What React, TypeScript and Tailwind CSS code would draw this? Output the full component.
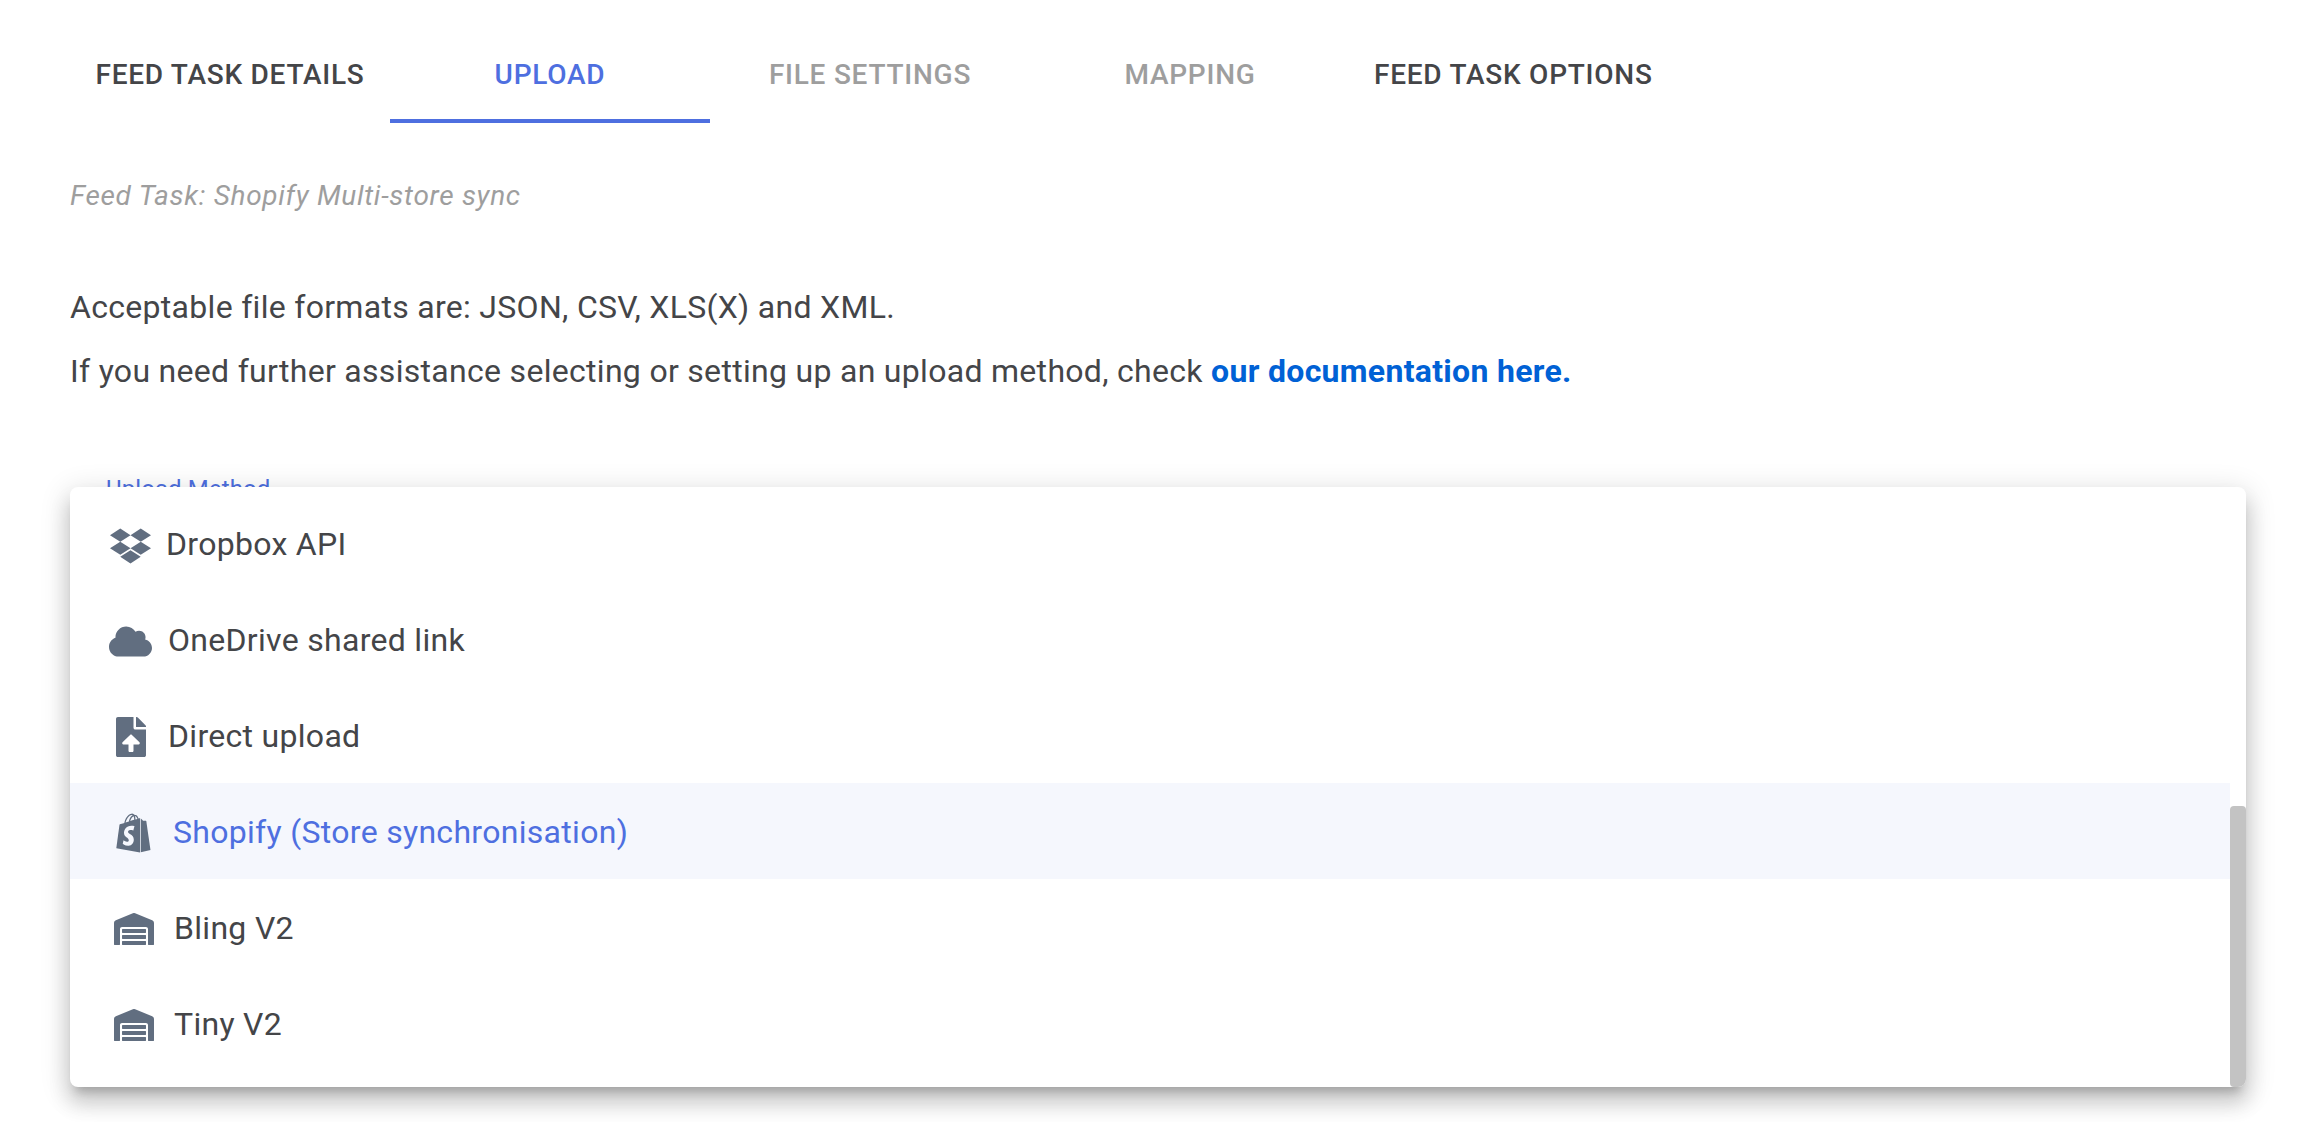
import type { ReactNode } from "react";
import { FaCloud, FaDropbox, FaFileUpload, FaShopify, FaWarehouse } from "react-icons/fa";

interface Tab {
  label: string;
  className: string;
}

interface Option {
  label: string;
  icon: ReactNode;
  active?: boolean;
}

const tabs: Tab[] = [
  { label: "FEED TASK DETAILS", className: "border-transparent text-[#444548]" },
  { label: "UPLOAD", className: "border-[#4e6fe0] text-[#4e6fe0]" },
  { label: "FILE SETTINGS", className: "border-transparent text-[#9e9e9e]" },
  { label: "MAPPING", className: "border-transparent text-[#9e9e9e]" },
  { label: "FEED TASK OPTIONS", className: "border-transparent text-[#444548]" },
];

const options: Option[] = [
  {
    label: "Dropbox API",
    icon: <FaDropbox className="w-[41px] h-[40px] mr-[15px] mt-[5px] text-[#616e80]" />,
  },
  {
    label: "OneDrive shared link",
    icon: <FaCloud className="w-[43px] h-[35px] mr-[16px] mt-[5px] -ml-[1px] text-[#616e80]" />,
  },
  {
    label: "Direct upload",
    icon: <FaFileUpload className="w-[30px] h-[40px] mr-[22px] ml-[6px] mt-[3px] text-[#616e80]" />,
  },
  {
    label: "Shopify (Store synchronisation)",
    icon: <FaShopify className="w-[35px] h-[40px] mr-[22px] ml-[6px] mt-[3px] text-[#616e80]" />,
    active: true,
  },
  {
    label: "Bling V2",
    icon: <FaWarehouse className="w-[40px] h-[32px] mr-[20px] ml-[4px] mt-[3px] text-[#616e80]" />,
  },
  {
    label: "Tiny V2",
    icon: <FaWarehouse className="w-[40px] h-[32px] mr-[20px] ml-[4px] mt-[3px] text-[#616e80]" />,
  },
];

export default function App() {
  return (
    <div className="relative h-[1122px] overflow-hidden bg-white font-['Roboto',sans-serif] text-[#444548]">
      {/* Tabs */}
      <div className="flex pl-[70px]">
        {tabs.map((tab) => (
          <div
            key={tab.label}
            className={`flex h-[123px] min-w-[320px] items-center justify-center border-b-4 px-6 pt-[30px] text-[28px] font-medium tracking-[0.75px] ${tab.className}`}
          >
            {tab.label}
          </div>
        ))}
      </div>

      <div className="px-[70px]">
        <p className="mt-[55px] text-[28px] leading-[36px] italic tracking-[0.7px] text-[#9e9e9e]">
          Feed Task: Shopify Multi-store sync
        </p>
        <p className="mt-[69px] text-[32px] leading-[48px] tracking-[0.3px]">
          Acceptable file formats are: JSON, CSV, XLS(X) and XML.
        </p>
        <p className="mt-[16px] text-[32px] leading-[48px] tracking-[0.3px]">
          If you need further assistance selecting or setting up an upload method, check{" "}
          <a className="font-bold text-[#0061d5]">our documentation here.</a>
        </p>
        <label className="mt-[78px] block pl-[36px] text-[24px] leading-[32px] tracking-[0.1px] text-[#4e6fe0]">
          Upload Method
        </label>
      </div>

      {/* Open select menu */}
      <div className="absolute left-[70px] top-[487px] w-[2176px] overflow-hidden rounded-[8px] bg-white shadow-[0_10px_10px_-6px_rgba(0,0,0,0.2),0_16px_20px_2px_rgba(0,0,0,0.14),0_6px_28px_4px_rgba(0,0,0,0.12)]">
        <ul className="mr-[16px] pb-[16px] pt-[8px]">
          {options.map((option) => (
            <li
              key={option.label}
              className={`flex h-[96px] items-center pl-[40px] text-[32px] tracking-[0.3px] ${
                option.active ? "bg-[#f5f7fd] text-[#4e6fe0]" : ""
              }`}
            >
              {option.icon}
              <span className="pt-[1px]">{option.label}</span>
            </li>
          ))}
        </ul>
        <div className="absolute bottom-0 right-0 top-[319px] w-[16px] rounded-[4px] bg-[#c3c3c3]" />
      </div>
    </div>
  );
}
